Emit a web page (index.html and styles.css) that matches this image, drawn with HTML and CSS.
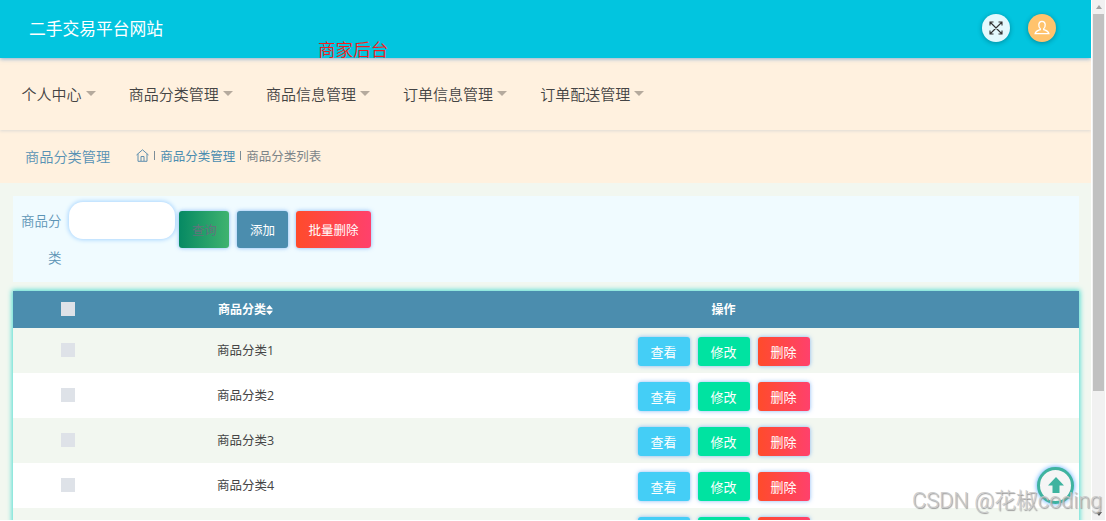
FILE: index.html
```html
<!DOCTYPE html>
<html lang="zh-CN">
<head>
  <meta charset="UTF-8">
  <title>二手交易平台网站</title>
  <link rel="stylesheet" href="styles.css">
</head>
<body>

  <div class="page">
    <header class="topbar">
      <h1 class="brand">二手交易平台网站</h1>
      <div class="top-icons">
        <span class="round full">
          <svg width="14" height="14" viewBox="0 0 14 14" fill="none" stroke="#333" stroke-width="1.1">
            <path d="M1 1l12 12M13 1L1 13M1 4.5V1h3.500M9.500 1H13v3.500M13 9.500V13H9.500M4.500 13H1V9.500"/>
          </svg>
        </span>
        <span class="round user">
          <svg width="16" height="16" viewBox="0 0 16 16" fill="none" stroke="#fff" stroke-width="1.3">
            <path d="M6.300 8.700C5 7.700 4.700 6 4.800 4.500 4.900 2.500 6 1.300 8 1.300s3.100 1.200 3.200 3.200c.1 1.500-.2 3.200-1.500 4.200v.9c1.800.7 4.600 1.100 5.200 4.100H1.100c.6-3 3.400-3.400 5.200-4.100z"/>
          </svg>
        </span>
      </div>
      <span class="role">商家后台</span>
    </header>

    <nav class="menu">
      <a class="menu-item">个人中心</a>
      <a class="menu-item">商品分类管理</a>
      <a class="menu-item">商品信息管理</a>
      <a class="menu-item">订单信息管理</a>
      <a class="menu-item">订单配送管理</a>
    </nav>

    <div class="crumbs">
      <h2 class="crumb-title">商品分类管理</h2>
      <svg class="home" width="13" height="13" viewBox="0 0 13 13" fill="none" stroke="#5f8fae" stroke-width="1">
        <path d="M.5 6L6.500.8 12.500 6M2 5v7.300h9V5M5 12V7.500h3V12"/>
      </svg>
      <span class="sep"></span>
      <a class="crumb-link">商品分类管理</a>
      <span class="sep"></span>
      <span class="crumb-now">商品分类列表</span>
    </div>

    <main class="content">
      <form class="search">
        <label class="search-label" for="category">商品分类</label>
        <input class="search-input" type="text" id="category">
        <div class="search-buttons">
          <button type="button" class="btn query">查询</button>
          <button type="button" class="btn add">添加</button>
          <button type="button" class="btn remove">批量删除</button>
        </div>
      </form>

      <table class="list">
        <thead>
          <tr>
            <th class="col-check"><span class="check"></span></th>
            <th class="col-name">商品分类<svg class="sort" width="7" height="10" viewBox="0 0 7 10" fill="#fff"><path d="M3.500 0L7 4.300H0zM0 5.700h7L3.500 10z"/></svg></th>
            <th>操作</th>
          </tr>
        </thead>
        <tbody id="rows"></tbody>
      </table>
    </main>
  </div>

  <div class="scrollbar">
    <span class="arrow up"></span>
    <span class="thumb"></span>
    <span class="arrow down"></span>
  </div>

  <div class="to-top">
    <svg width="16" height="16" viewBox="0 0 16 16" fill="#3eb39f"><path d="M8 0l8 8.500h-4.500V16h-7V8.500H0z"/></svg>
  </div>
  <div class="watermark">CSDN @花椒coding</div>

  <script>
    let html = "";
    for (let i = 1; i <= 5; i++) {
      html += `
        <tr>
          <td><span class="check"></span></td>
          <td>商品分类${i}</td>
          <td>
            <div class="actions">
              <button class="btn small view">查看</button>
              <button class="btn small edit">修改</button>
              <button class="btn small remove">删除</button>
            </div>
          </td>
        </tr>`;
    }
    document.getElementById("rows").innerHTML = html;
  </script>

</body>
</html>
```
FILE: styles.css
```css
* {
  box-sizing: border-box;
}

body {
  margin: 0;
  height: 521px;
  overflow: hidden;
  display: flex;
  position: relative;
  background: #fff;
  color: #444;
  font-family: "Open Sans", "Noto Sans CJK SC", sans-serif;
  font-size: 12.5px;
}

.page {
  width: 1091px;
  height: 520px;
  overflow: hidden;
  background: #f2f7f0;
}

.topbar {
  position: relative;
  z-index: 2;
  height: 58px;
  padding: 0 35px 2px 29px;
  display: flex;
  align-items: center;
  justify-content: space-between;
  background: #02c5df;
  box-shadow: 0 1px 4px rgba(60, 130, 200, 0.6);
}

.brand {
  margin: 0;
  color: #fff;
  font-size: 16.75px;
  font-weight: 400;
}

.top-icons {
  display: flex;
  gap: 18px;
}

.round {
  width: 28px;
  height: 28px;
  border-radius: 50%;
  display: flex;
  align-items: center;
  justify-content: center;
  box-shadow: 0 1px 5px rgba(0, 0, 0, 0.3);
}

.full {
  background: #e3f9fd;
}

.user {
  background: #ffc36d;
}

.role {
  position: absolute;
  left: 318px;
  top: 37px;
  color: #f21d1d;
  font-size: 17.6px;
  line-height: 25px;
  font-weight: 350;
}

.menu {
  position: relative;
  z-index: 1;
  height: 72px;
  padding: 0 21.500px 2px;
  display: flex;
  align-items: center;
  gap: 33.200px;
  background: #fff1df;
  box-shadow: 0 1px 3px rgba(80, 130, 180, 0.2);
}

.menu-item {
  display: flex;
  align-items: center;
  color: #444;
  font-size: 15px;
  font-weight: 350;
}

.menu-item::after {
  content: "";
  margin-left: 4px;
  border: 5px solid transparent;
  border-top-color: #b5aa9d;
  border-bottom: 0;
}

.crumbs {
  height: 53px;
  padding: 0 0 2px 25px;
  display: flex;
  align-items: center;
  background: #fff1df;
  color: #7c8488;
}

.crumb-title {
  margin: 0 26px 0 0;
  color: #5791b4;
  font-size: 14.2px;
  font-weight: 350;
}

.sep {
  width: 1px;
  height: 9px;
  margin: 0 5px;
  background: #7c8d98;
}

.crumb-link {
  color: #4b8db0;
}

.content {
  padding: 13px 12.500px 0;
}

.search {
  height: 86px;
  padding: 6px 0 0 5.500px;
  display: flex;
  align-items: flex-start;
  background: #f0fbff;
}

.search-label {
  width: 43.500px;
  margin-right: 7.500px;
  padding-top: 1px;
  color: #5c94b5;
  font-size: 13.5px;
  line-height: 36.500px;
  font-weight: 350;
  text-align: right;
}

.search-input {
  width: 106px;
  height: 37px;
  border: 0;
  border-radius: 14px;
  background: #fff;
  box-shadow: 0 0 4px 1px #a9d6ff;
}

.search-buttons {
  display: flex;
  gap: 8px;
  padding: 9px 0 0 4px;
}

.btn {
  height: 36.500px;
  padding: 0 12.700px;
  border: 0;
  border-radius: 3px;
  color: #fff;
  font-family: inherit;
  font-size: 12.5px;
  white-space: nowrap;
  box-shadow: 0 0 4px rgba(60, 140, 240, 0.6);
}

.query {
  background: linear-gradient(90deg, #068963, #3fb36f);
  color: #60747c;
}

.add {
  background: #4b8dae;
}

.remove {
  background: linear-gradient(90deg, #ff4b2b, #ff416c);
}

.list {
  width: 100%;
  margin-top: 9px;
  table-layout: fixed;
  border-collapse: collapse;
  background: #fff;
  text-align: center;
  box-shadow: 0 0 5px 1px #4bdcd0;
}

.list th {
  height: 37px;
  padding: 0 0 2px;
  background: #4b8dae;
  color: #fff;
  font-size: 12px;
}

.list .col-check {
  width: 110px;
}

.list .col-name {
  width: 246px;
}

.sort {
  vertical-align: -1px;
}

.list td {
  height: 45px;
  padding: 0 0 2px;
}

.list tbody tr:nth-child(odd) {
  background: #f2f7f0;
}

.check {
  display: block;
  width: 14px;
  height: 14px;
  margin: 0 auto;
  background: #dee2e8;
}

.actions {
  display: flex;
  justify-content: center;
  gap: 8px;
  padding-top: 3px;
}

.small {
  width: 52px;
  height: 29px;
  font-size: 13px;
}

.view {
  background: #44cef6;
}

.edit {
  background: #00e3a1;
}

.scrollbar {
  width: 13px;
  height: 520px;
  padding: 5px 1px 4px;
  margin-left: 1px;
  display: flex;
  flex-direction: column;
  align-items: center;
  background: #f1f1f1;
}

.thumb {
  width: 11px;
  height: 377px;
  margin: 5px 0 auto;
  background: #c1c1c1;
}

.arrow {
  border: 3px solid transparent;
}

.up {
  border-top: 0;
  border-bottom: 4px solid #a3a3a3;
}

.down {
  border-bottom: 0;
  border-top: 4px solid #505050;
}

.to-top {
  position: absolute;
  left: 1037px;
  top: 467px;
  width: 37px;
  height: 37px;
  padding-bottom: 1px;
  border: 3px solid #3eb39f;
  border-radius: 50%;
  display: flex;
  align-items: center;
  justify-content: center;
  background: #f5f5f5;
  box-shadow: 0 0 5px #4ba5ff;
}

.watermark {
  position: absolute;
  left: 912px;
  top: 486px;
  color: rgba(200, 200, 200, 0.9);
  font-family: Roboto, "Noto Sans CJK SC", sans-serif;
  font-size: 21.8px;
  line-height: 30px;
  font-weight: 300;
  white-space: nowrap;
  text-shadow: 1px 1px 1px #999;
}
```
